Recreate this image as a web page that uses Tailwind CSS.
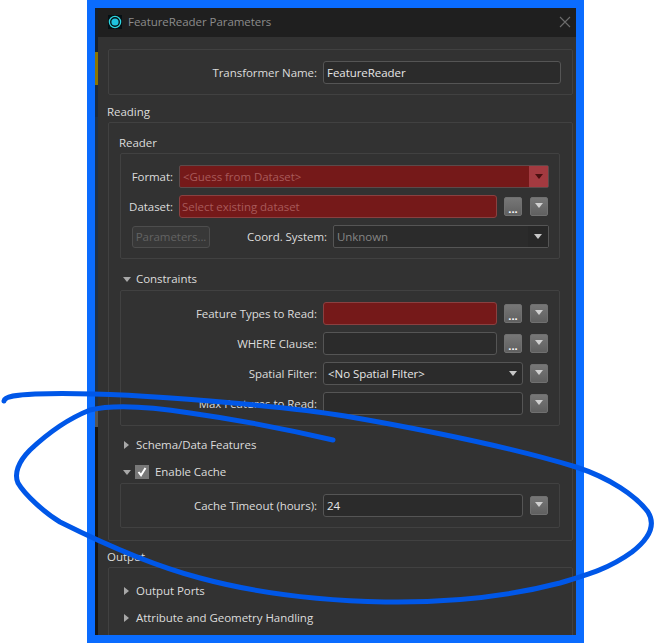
<!DOCTYPE html>
<html>
<head>
<meta charset="utf-8">
<script src="https://cdn.jsdelivr.net/npm/@tailwindcss/browser@4"></script>
</head>
<body class="bg-white">
<div class="relative w-[658px] h-[643px] overflow-hidden bg-white font-['Open_Sans','Noto_Sans',sans-serif] text-[11.5px] tracking-[-0.05px] leading-[16px] text-[#dcdcdc]">
  <div class="ml-[87px] w-[497px] h-[643px] border-8 border-[#0a6cff] flex overflow-hidden">
    <!-- sliver of the app behind -->
    <div class="w-[3px] shrink-0 flex flex-col bg-[#14202e]">
      <div class="h-[44px]"></div>
      <div class="h-[33px] bg-[#8a7500]"></div>
      <div class="h-[32px] bg-[#1a2a3c]"></div>
      <div class="h-[290px] bg-[#1c3048]"></div>
      <div class="h-[20px] bg-[#555555]"></div>
      <div class="flex-1 bg-[#161616]"></div>
    </div>
    <!-- dialog -->
    <div class="flex-1 min-w-0 flex flex-col bg-[#323232]">
      <div class="h-[29px] shrink-0 bg-[#1f1f1f] flex items-center pl-[10px] pr-[5px] pb-[1px]">
        <svg class="w-[14px] h-[14px] mr-[6px]" viewBox="0 0 14 14"><rect width="14" height="14" fill="#061014"/><circle cx="7" cy="7" r="5.6" fill="none" stroke="#2fd5e0" stroke-width="1.3"/><circle cx="7" cy="7" r="3.6" fill="#1fc4e0"/></svg>
        <span class="text-[#8c8c8c] flex-1">FeatureReader Parameters</span>
        <svg class="w-[12px] h-[12px]" viewBox="0 0 12 12"><path d="M1 1 L11 11 M11 1 L1 11" stroke="#6c6c6c" stroke-width="1.1" fill="none"/></svg>
      </div>
      <div class="flex-1 min-h-0 pl-[10px] pr-[3px] pt-[12px]">
        <div class="h-[46px] border border-[#414141] rounded-[2px] flex items-center pr-[11px] pt-[1px]">
          <span class="w-[208px] text-right whitespace-nowrap">Transformer Name:</span>
          <div class="flex-1 ml-[6px] h-[23px] bg-[#2b2b2b] border border-[#555555] rounded-[3px] flex items-center px-[3px] text-[#e6e6e6]">FeatureReader</div>
        </div>
        <div class="h-[27px] pt-[9px] -ml-[1px]">Reading</div>
        <div class="h-[419px] border border-[#414141] rounded-[2px] pl-[11px] pr-[12px]">
          <div class="h-[30px] pt-[12px] -ml-[1px]">Reader</div>
          <div class="h-[106px] border border-[#414141] rounded-[2px] pt-[11px] pr-[10px]">
            <div class="h-[23px] flex items-center">
              <span class="w-[52px] text-right">Format:</span>
              <div class="flex-1 ml-[6px] h-[23px] bg-[#751919] border border-[#5c4a4a] rounded-[2px] flex items-center justify-between pl-[3px] text-[#a85a5a]">
                <span>&lt;Guess from Dataset&gt;</span>
                <span class="w-[19px] h-[21px] bg-[#a33a40] flex items-center justify-center"><svg class="w-[8px] h-[5px]" viewBox="0 0 8 5"><path d="M0 0H8L4 5Z" fill="#4a1010"/></svg></span>
              </div>
            </div>
            <div class="h-[23px] mt-[7px] flex items-center">
              <span class="w-[52px] text-right">Dataset:</span>
              <div class="w-[318px] ml-[6px] h-[23px] bg-[#751919] border border-[#8a4040] rounded-[3px] flex items-center pl-[2px] text-[#a85a5a]">Select existing dataset</div>
              <div class="w-[18px] h-[19px] ml-[7px] rounded-[2px] border border-[#707070] bg-gradient-to-b from-[#777777] to-[#606060] text-white text-[11px] font-bold leading-[21px] text-center">...</div>
              <div class="w-[18px] h-[19px] ml-[8px] rounded-[2px] border border-[#707070] bg-gradient-to-b from-[#777777] to-[#606060] flex items-center justify-center pb-[2px]"><svg class="w-[8px] h-[5px]" viewBox="0 0 8 5"><path d="M0 0H8L4 5Z" fill="#d0d0d0"/></svg></div>
            </div>
            <div class="h-[23px] mt-[7px] flex items-center">
              <div class="w-[78px] h-[22px] ml-[11px] border border-[#4d4d4d] rounded-[3px] bg-[#383838] text-[#636363] flex items-center justify-center whitespace-nowrap">Parameters...</div>
              <span class="w-[117px] text-right whitespace-nowrap">Coord. System:</span>
              <div class="flex-1 ml-[6px] h-[23px] bg-[#2b2b2b] border border-[#555555] rounded-[2px] flex items-center justify-between pl-[3px] text-[#858585]">
                <span>Unknown</span>
                <span class="w-[20px] h-[21px] bg-[#282828] flex items-center justify-center"><svg class="w-[8px] h-[5px]" viewBox="0 0 8 5"><path d="M0 0H8L4 5Z" fill="#c8c8c8"/></svg></span>
              </div>
            </div>
          </div>
          <div class="h-[31px] flex items-center pt-[9px] pl-[3px]">
            <svg class="w-[8px] h-[5px] mr-[5px]" viewBox="0 0 8 5"><path d="M0 0H8L4 5Z" fill="#a8a8a8"/></svg>
            <span>Constraints</span>
          </div>
          <div class="h-[136px] border border-[#414141] rounded-[2px] pt-[11px] pr-[10px]">
            <div class="h-[23px] flex items-center">
              <span class="w-[196px] text-right whitespace-nowrap">Feature Types to Read:</span>
              <div class="w-[174px] ml-[6px] h-[23px] bg-[#751919] border border-[#8a4040] rounded-[3px]"></div>
              <div class="w-[18px] h-[19px] ml-[7px] rounded-[2px] border border-[#707070] bg-gradient-to-b from-[#777777] to-[#606060] text-white text-[11px] font-bold leading-[21px] text-center">...</div>
              <div class="w-[18px] h-[19px] ml-[8px] rounded-[2px] border border-[#707070] bg-gradient-to-b from-[#777777] to-[#606060] flex items-center justify-center pb-[2px]"><svg class="w-[8px] h-[5px]" viewBox="0 0 8 5"><path d="M0 0H8L4 5Z" fill="#d0d0d0"/></svg></div>
            </div>
            <div class="h-[23px] mt-[7px] flex items-center">
              <span class="w-[196px] text-right">WHERE Clause:</span>
              <div class="w-[174px] ml-[6px] h-[23px] bg-[#2b2b2b] border border-[#555555] rounded-[3px]"></div>
              <div class="w-[18px] h-[19px] ml-[7px] rounded-[2px] border border-[#707070] bg-gradient-to-b from-[#777777] to-[#606060] text-white text-[11px] font-bold leading-[21px] text-center">...</div>
              <div class="w-[18px] h-[19px] ml-[8px] rounded-[2px] border border-[#707070] bg-gradient-to-b from-[#777777] to-[#606060] flex items-center justify-center pb-[2px]"><svg class="w-[8px] h-[5px]" viewBox="0 0 8 5"><path d="M0 0H8L4 5Z" fill="#d0d0d0"/></svg></div>
            </div>
            <div class="h-[23px] mt-[7px] flex items-center">
              <span class="w-[196px] text-right">Spatial Filter:</span>
              <div class="w-[200px] ml-[6px] h-[23px] bg-[#2b2b2b] border border-[#555555] rounded-[3px] flex items-center justify-between pl-[4px] pr-[4px] text-[#e6e6e6]">
                <span>&lt;No Spatial Filter&gt;</span>
                <svg class="w-[8px] h-[5px] mr-[1px]" viewBox="0 0 8 5"><path d="M0 0H8L4 5Z" fill="#c8c8c8"/></svg>
              </div>
              <div class="w-[18px] h-[19px] ml-[7px] rounded-[2px] border border-[#707070] bg-gradient-to-b from-[#777777] to-[#606060] flex items-center justify-center pb-[2px]"><svg class="w-[8px] h-[5px]" viewBox="0 0 8 5"><path d="M0 0H8L4 5Z" fill="#d0d0d0"/></svg></div>
            </div>
            <div class="h-[23px] mt-[7px] flex items-center">
              <span class="w-[196px] text-right whitespace-nowrap">Max Features to Read:</span>
              <div class="w-[200px] ml-[6px] h-[23px] bg-[#2b2b2b] border border-[#555555] rounded-[3px]"></div>
              <div class="w-[18px] h-[19px] ml-[7px] rounded-[2px] border border-[#707070] bg-gradient-to-b from-[#777777] to-[#606060] flex items-center justify-center pb-[2px]"><svg class="w-[8px] h-[5px]" viewBox="0 0 8 5"><path d="M0 0H8L4 5Z" fill="#d0d0d0"/></svg></div>
            </div>
          </div>
          <div class="h-[38px] flex items-center pl-[4px]">
            <svg class="w-[5px] h-[8px] mr-[7px]" viewBox="0 0 5 8"><path d="M0 0V8L5 4Z" fill="#a8a8a8"/></svg>
            <span>Schema/Data Features</span>
          </div>
          <div class="h-[19px] flex items-center pl-[3px] pb-[3px]">
            <svg class="w-[8px] h-[5px] mr-[4px]" viewBox="0 0 8 5"><path d="M0 0H8L4 5Z" fill="#a8a8a8"/></svg>
            <span class="w-[14px] h-[14px] bg-[#787878] flex items-center justify-center mr-[6px]"><svg class="w-[10px] h-[10px]" viewBox="0 0 10 10"><path d="M1.5 5 L4 8.2 L8.5 1" stroke="#ffffff" stroke-width="2" fill="none"/></svg></span>
            <span>Enable Cache</span>
          </div>
          <div class="h-[45px] border border-[#414141] rounded-[2px] pt-[10px] pr-[10px]">
            <div class="h-[23px] flex items-center">
              <span class="w-[196px] text-right whitespace-nowrap">Cache Timeout (hours):</span>
              <div class="w-[200px] ml-[6px] h-[23px] bg-[#2b2b2b] border border-[#555555] rounded-[3px] flex items-center pl-[3px] text-[#e6e6e6]">24</div>
              <div class="w-[18px] h-[19px] ml-[7px] rounded-[2px] border border-[#707070] bg-gradient-to-b from-[#777777] to-[#606060] flex items-center justify-center pb-[2px]"><svg class="w-[8px] h-[5px]" viewBox="0 0 8 5"><path d="M0 0H8L4 5Z" fill="#d0d0d0"/></svg></div>
            </div>
          </div>
        </div>
        <div class="h-[26px] pt-[8px] -ml-[1px]">Output</div>
        <div class="h-[80px] border border-[#414141] rounded-[2px] pl-[15px]">
          <div class="h-[46px] flex items-center">
            <svg class="w-[5px] h-[8px] mr-[7px]" viewBox="0 0 5 8"><path d="M0 0V8L5 4Z" fill="#a8a8a8"/></svg>
            <span>Output Ports</span>
          </div>
          <div class="h-[8px] flex items-center">
            <svg class="w-[5px] h-[8px] mr-[7px]" viewBox="0 0 5 8"><path d="M0 0V8L5 4Z" fill="#a8a8a8"/></svg>
            <span class="whitespace-nowrap">Attribute and Geometry Handling</span>
          </div>
        </div>
      </div>
    </div>
  </div>
  <!-- hand-drawn annotation -->
  <svg class="absolute inset-0 pointer-events-none" width="658" height="643" viewBox="0 0 658 643">
    <path d="M4 401 C5 396 16 395 35 394 C90 392 150 396 210 401 C270 406 310 410 345 416 C420 429 510 447 576 467 C610 478 636 496 648 512 C656 525 650 538 632 552 C610 568 590 574 560 583 C510 596 450 603 385 602 C340 601 270 597 200 578 C150 565 100 542 60 522 C45 513 25 495 18 483 C14 474 18 462 30 450 C50 431 70 418 90 410 C110 405 140 405 190 413 C240 420 290 430 333 440" fill="none" stroke="#0057e8" stroke-width="5" stroke-linecap="round" stroke-linejoin="round"/>
  </svg>
</div>
</body>
</html>
